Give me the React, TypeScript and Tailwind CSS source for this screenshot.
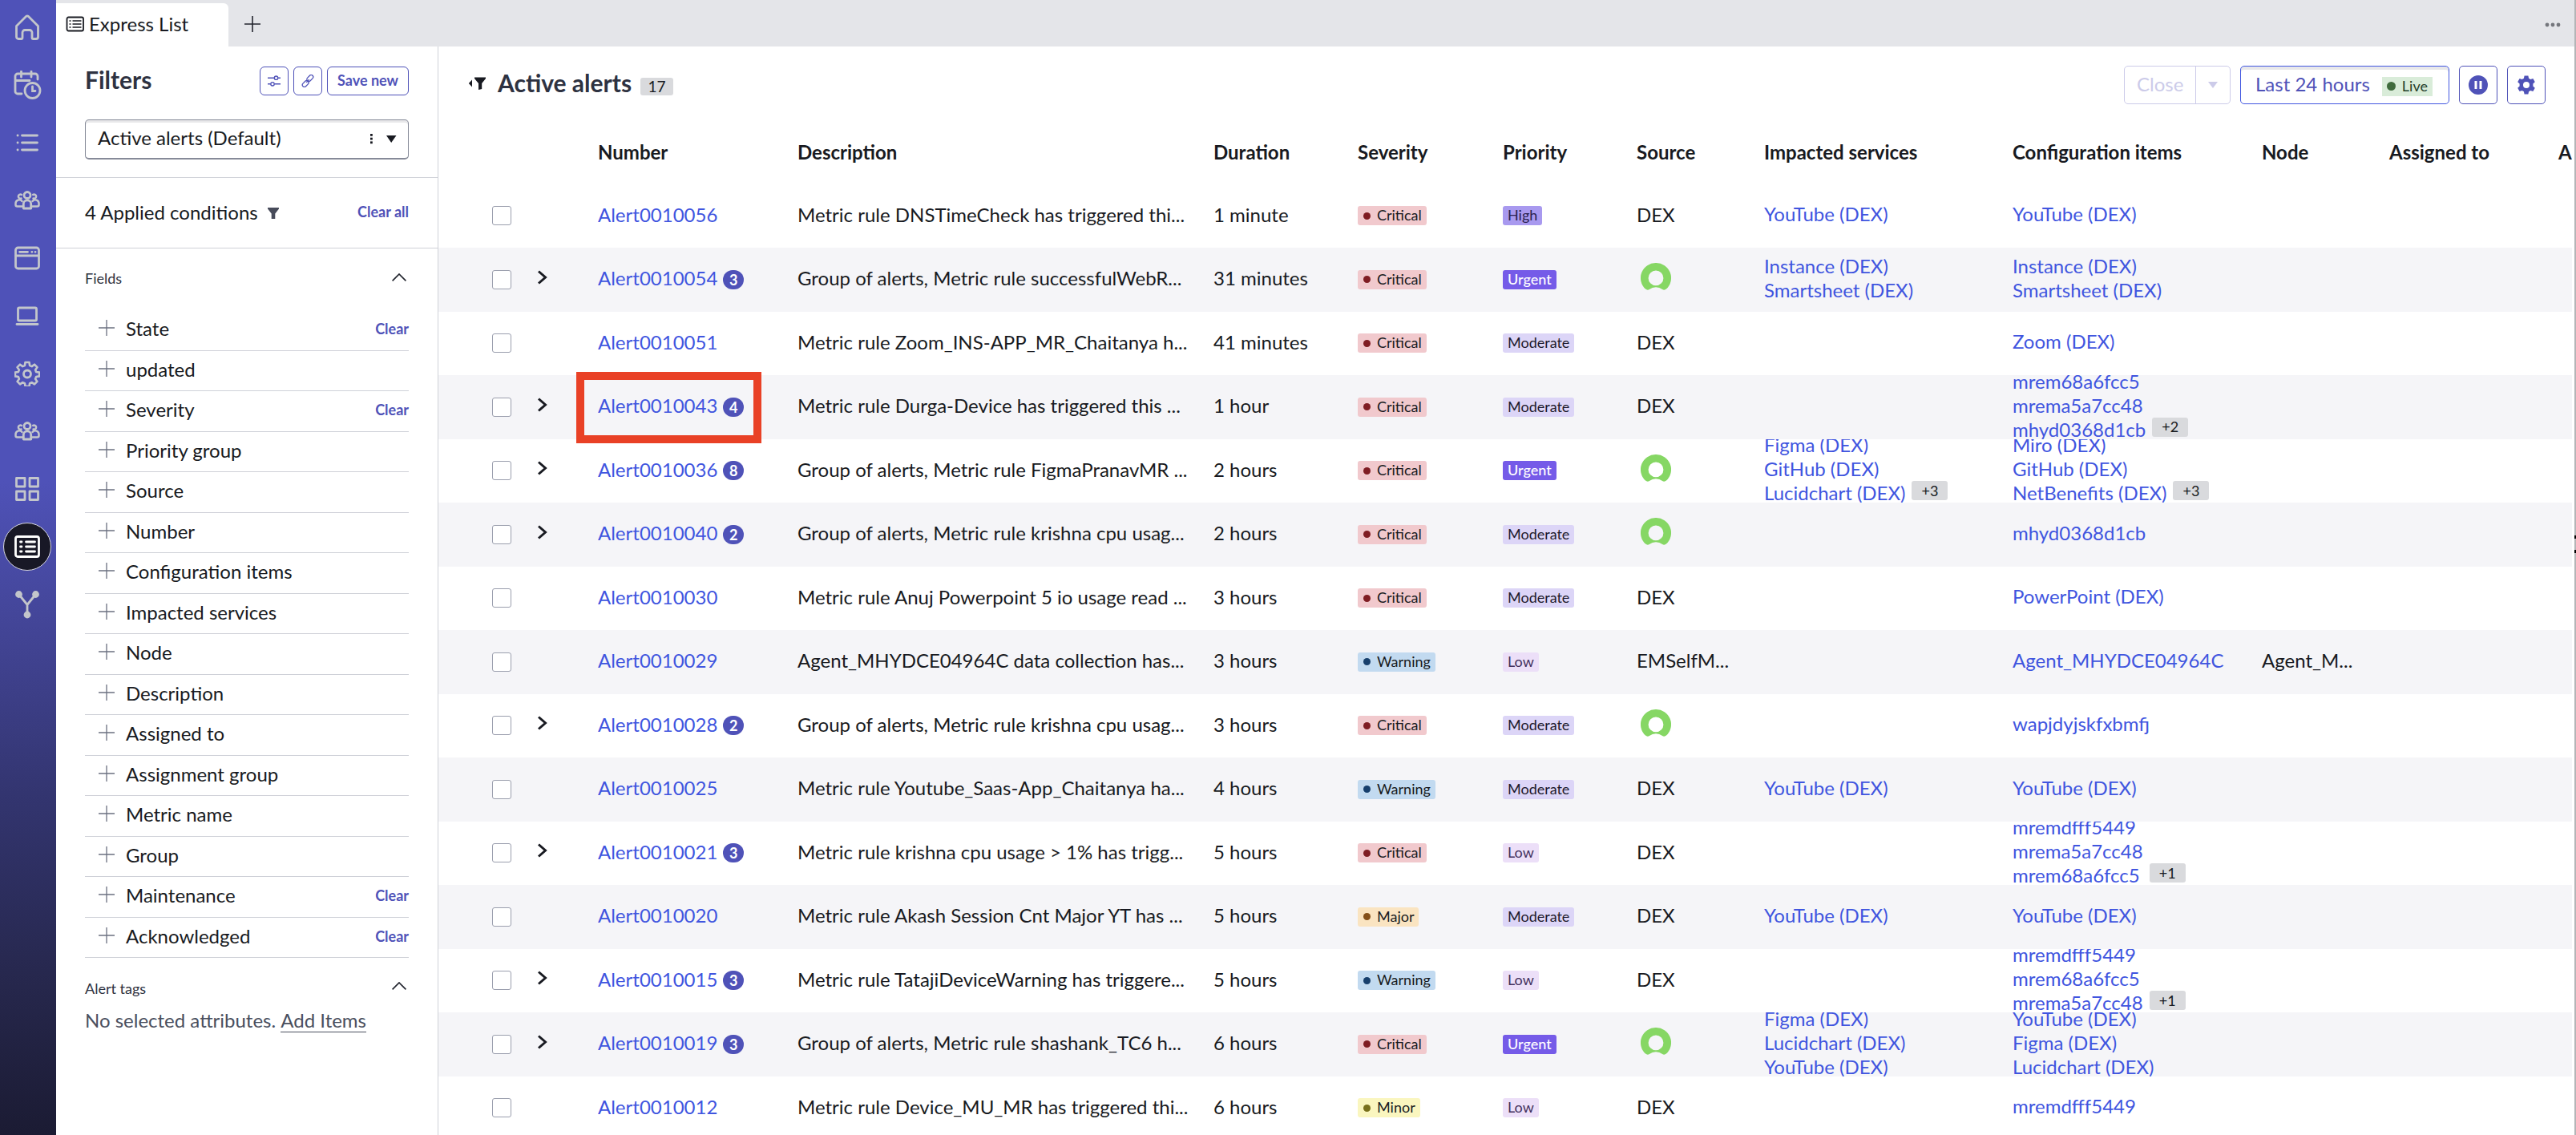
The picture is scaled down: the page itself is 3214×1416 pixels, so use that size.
import React from 'react';

type Alert = {
  number: string;
  count?: number;
  description: string;
  duration: string;
  severity: 'Critical' | 'Warning' | 'Major' | 'Minor';
  priority: 'High' | 'Urgent' | 'Moderate' | 'Low';
  source: string;
  services?: string[];
  moreServices?: number;
  items?: string[];
  moreItems?: number;
  node?: string;
};

const alerts: Alert[] = [
  { number: 'Alert0010056', description: 'Metric rule DNSTimeCheck has triggered thi...', duration: '1 minute', severity: 'Critical', priority: 'High', source: 'DEX', services: ['YouTube (DEX)'], items: ['YouTube (DEX)'] },
  { number: 'Alert0010054', count: 3, description: 'Group of alerts, Metric rule successfulWebR...', duration: '31 minutes', severity: 'Critical', priority: 'Urgent', source: 'now', services: ['Instance (DEX)', 'Smartsheet (DEX)'], items: ['Instance (DEX)', 'Smartsheet (DEX)'] },
  { number: 'Alert0010051', description: 'Metric rule Zoom_INS-APP_MR_Chaitanya h...', duration: '41 minutes', severity: 'Critical', priority: 'Moderate', source: 'DEX', items: ['Zoom (DEX)'] },
  { number: 'Alert0010043', count: 4, description: 'Metric rule Durga-Device has triggered this ...', duration: '1 hour', severity: 'Critical', priority: 'Moderate', source: 'DEX', items: ['mrem68a6fcc5', 'mrema5a7cc48', 'mhyd0368d1cb'], moreItems: 2 },
  { number: 'Alert0010036', count: 8, description: 'Group of alerts, Metric rule FigmaPranavMR ...', duration: '2 hours', severity: 'Critical', priority: 'Urgent', source: 'now', services: ['Figma (DEX)', 'GitHub (DEX)', 'Lucidchart (DEX)'], moreServices: 3, items: ['Miro (DEX)', 'GitHub (DEX)', 'NetBenefits (DEX)'], moreItems: 3 },
  { number: 'Alert0010040', count: 2, description: 'Group of alerts, Metric rule krishna cpu usag...', duration: '2 hours', severity: 'Critical', priority: 'Moderate', source: 'now', items: ['mhyd0368d1cb'] },
  { number: 'Alert0010030', description: 'Metric rule Anuj Powerpoint 5 io usage read ...', duration: '3 hours', severity: 'Critical', priority: 'Moderate', source: 'DEX', items: ['PowerPoint (DEX)'] },
  { number: 'Alert0010029', description: 'Agent_MHYDCE04964C data collection has...', duration: '3 hours', severity: 'Warning', priority: 'Low', source: 'EMSelfM...', items: ['Agent_MHYDCE04964C'], node: 'Agent_M...' },
  { number: 'Alert0010028', count: 2, description: 'Group of alerts, Metric rule krishna cpu usag...', duration: '3 hours', severity: 'Critical', priority: 'Moderate', source: 'now', items: ['wapjdyjskfxbmfj'] },
  { number: 'Alert0010025', description: 'Metric rule Youtube_Saas-App_Chaitanya ha...', duration: '4 hours', severity: 'Warning', priority: 'Moderate', source: 'DEX', services: ['YouTube (DEX)'], items: ['YouTube (DEX)'] },
  { number: 'Alert0010021', count: 3, description: 'Metric rule krishna cpu usage > 1% has trigg...', duration: '5 hours', severity: 'Critical', priority: 'Low', source: 'DEX', items: ['mremdfff5449', 'mrema5a7cc48', 'mrem68a6fcc5'], moreItems: 1 },
  { number: 'Alert0010020', description: 'Metric rule Akash Session Cnt Major YT has ...', duration: '5 hours', severity: 'Major', priority: 'Moderate', source: 'DEX', services: ['YouTube (DEX)'], items: ['YouTube (DEX)'] },
  { number: 'Alert0010015', count: 3, description: 'Metric rule TatajiDeviceWarning has triggere...', duration: '5 hours', severity: 'Warning', priority: 'Low', source: 'DEX', items: ['mremdfff5449', 'mrem68a6fcc5', 'mrema5a7cc48'], moreItems: 1 },
  { number: 'Alert0010019', count: 3, description: 'Group of alerts, Metric rule shashank_TC6 h...', duration: '6 hours', severity: 'Critical', priority: 'Urgent', source: 'now', services: ['Figma (DEX)', 'Lucidchart (DEX)', 'YouTube (DEX)'], items: ['YouTube (DEX)', 'Figma (DEX)', 'Lucidchart (DEX)'] },
  { number: 'Alert0010012', description: 'Metric rule Device_MU_MR has triggered thi...', duration: '6 hours', severity: 'Minor', priority: 'Low', source: 'DEX', items: ['mremdfff5449'] },
];

const columns = ['Number', 'Description', 'Duration', 'Severity', 'Priority', 'Source', 'Impacted services', 'Configuration items', 'Node', 'Assigned to', 'A'];

const fields = [
  { name: 'State', clear: true },
  { name: 'updated' },
  { name: 'Severity', clear: true },
  { name: 'Priority group' },
  { name: 'Source' },
  { name: 'Number' },
  { name: 'Configuration items' },
  { name: 'Impacted services' },
  { name: 'Node' },
  { name: 'Description' },
  { name: 'Assigned to' },
  { name: 'Assignment group' },
  { name: 'Metric name' },
  { name: 'Group' },
  { name: 'Maintenance', clear: true },
  { name: 'Acknowledged', clear: true },
];

const severityStyles = {
  Critical: { badge: 'bg-[#f1c9cd]', dot: 'bg-[#7f1d23]' },
  Warning: { badge: 'bg-[#c2daf0]', dot: 'bg-[#173f6c]' },
  Major: { badge: 'bg-[#fae4c1]', dot: 'bg-[#84501a]' },
  Minor: { badge: 'bg-[#faf6bf]', dot: 'bg-[#78701c]' },
};

const priorityStyles = {
  High: 'bg-[#a899ef] text-[#2a2250]',
  Urgent: 'bg-[#755be8] text-white font-medium',
  Moderate: 'bg-[#dcd5f7] text-[#1d1a2e]',
  Low: 'bg-[#ecdff8] text-[#43305c]',
};

const gridCols = 'grid grid-cols-[56px_76px_249px_519px_180px_181px_167px_159px_310px_311px_159px_211px_1fr]';

const gearPath =
  'M13.5 2h5l.6 4 2.6 1.1 3.3-2.4 3.4 3.5-2.3 3.2 1 2.6 4 .6v4.8l-4 .7-1 2.6 2.3 3.2-3.4 3.5-3.3-2.3-2.6 1-.6 4h-5l-.6-4-2.6-1-3.3 2.3-3.4-3.5 2.3-3.2-1-2.6-4-.7v-4.8l4-.6 1-2.6-2.3-3.2L7 4.7l3.300 2.400L12.900 6z';

function Icon({ children, className = '' }: { children: React.ReactNode; className?: string }) {
  return (
    <svg viewBox="0 0 32 32" className={`w-8 h-8 shrink-0 ${className}`} fill="none" stroke="currentColor" strokeWidth="2.8" strokeLinecap="round" strokeLinejoin="round">
      {children}
    </svg>
  );
}

function UsersIcon() {
  return (
    <Icon>
      <circle cx="16" cy="9.500" r="4" />
      <path d="M11.300 26v-5.500a4.700 4.700 0 0 1 9.400 0V26z" />
      <path d="M8.500 13.500a2.600 2.600 0 1 1 .3-4.600M23.500 13.500a2.600 2.600 0 1 0-.3-4.600" strokeWidth="2.500" />
      <path d="M11 23.500H3.500a2 2 0 0 1-2-2v-1.500a4.500 4.500 0 0 1 8-3M21 23.500h7.500a2 2 0 0 0 2-2v-1.500a4.500 4.500 0 0 0-8-3" strokeWidth="2.500" />
    </Icon>
  );
}

function Sidebar() {
  return (
    <aside className="w-[70px] shrink-0 flex flex-col items-center gap-3 pr-[2px] bg-[linear-gradient(to_bottom,#4f52b8_0px,#4f52b8_600px,#434597_780px,#333570_990px,#26274c_1230px,#1b1b33_1416px)] text-[#c3c6cb] pt-[4px]">
      <div className="h-[60px] flex items-center">
        <Icon>
          <path d="M2.500 14.500 14.500 2.600a2.200 2.200 0 0 1 3 0L29.500 14.500V28a2.500 2.500 0 0 1-2.500 2.500h-3.500A1.500 1.500 0 0 1 22 29v-6.500a3 3 0 0 0-3-3h-6a3 3 0 0 0-3 3V29a1.500 1.500 0 0 1-1.500 1.500H5A2.500 2.500 0 0 1 2.500 28z" />
        </Icon>
      </div>
      <div className="h-[60px] flex items-center">
        <svg viewBox="0 0 36 36" className="w-9 h-9" fill="none" stroke="currentColor" strokeWidth="2.800" strokeLinecap="round">
          <path d="M11 29H6a3 3 0 0 1-3-3V7a3 3 0 0 1 3-3h22a3 3 0 0 1 3 3v4M3 12.500h18M10.500 1v7M23 1v7" />
          <circle cx="24.500" cy="25" r="9.500" />
          <path d="M24.500 20v5.500H28" />
        </svg>
      </div>
      <div className="h-[60px] flex items-center">
        <Icon>
          <path d="M9.500 7h19M9.500 16h19M9.500 25h19" />
          <path d="M4 7h.1M4 16h.1M4 25h.1" />
        </Icon>
      </div>
      <div className="h-[60px] flex items-center"><UsersIcon /></div>
      <div className="h-[60px] flex items-center">
        <Icon>
          <rect x="1.500" y="3" width="29" height="26" rx="3" />
          <path d="M2 13h28M6.500 8.300h10M21.800 8.300h.1M26 8.300h.1" />
        </Icon>
      </div>
      <div className="h-[60px] flex items-center">
        <Icon>
          <rect x="4.500" y="6" width="23" height="16" rx="1.500" />
          <path d="M3 26.500h26" />
        </Icon>
      </div>
      <div className="h-[60px] flex items-center">
        <Icon>
          <path d={gearPath} strokeWidth="2.600" />
          <circle cx="16" cy="16.500" r="4.500" />
        </Icon>
      </div>
      <div className="h-[60px] flex items-center"><UsersIcon /></div>
      <div className="h-[60px] flex items-center">
        <Icon>
          <path d="M2.500 2.500h10.500v10.500H2.500zM19 2.500h10.500v10.500H19zM2.500 19h10.500v10.500H2.500zM19 19h10.500v10.500H19z" />
        </Icon>
      </div>
      <div className="w-[60px] h-[60px] flex items-center justify-center rounded-full bg-[#181826] border border-[#d8d8e0] text-white">
        <Icon>
          <rect x="1.500" y="3.500" width="29" height="25" rx="2.500" />
          <path d="M14.500 10h11M14.500 16h11M14.500 22h11M7.500 10h1.500M7.500 16h1.500M7.500 22h1.500" />
        </Icon>
      </div>
      <div className="h-[60px] flex items-center">
        <svg viewBox="0 0 32 36" className="w-8 h-9" fill="currentColor" stroke="currentColor" strokeWidth="2.800">
          <path d="M5.500 5.500 16 18.500 26.500 5.500M16 18v12" fill="none" />
          <circle cx="5.500" cy="5.500" r="3" />
          <circle cx="26.500" cy="5.500" r="3" />
          <circle cx="16" cy="31" r="3" />
        </svg>
      </div>
    </aside>
  );
}

function TabBar() {
  return (
    <header className="h-[58px] flex items-end bg-[#e4e5e9]">
      <div className="w-[215px] h-[54px] flex items-center pl-3 pb-[2px] rounded-tr-[6px] bg-white">
        <svg viewBox="0 0 24 20" className="w-6 h-5 mr-[5px]" fill="none" stroke="#181a21" strokeWidth="1.800">
          <rect x="1.500" y="1.500" width="20.500" height="17" rx="2" />
          <path d="M8.500 6h11M8.500 10h11M8.500 14h11M4.500 6h2M4.500 10h2M4.500 14h2" strokeWidth="1.500" />
        </svg>
        <span>Express List</span>
      </div>
      <svg viewBox="0 0 20 20" className="w-5 h-5 ml-5 mb-[18px]" stroke="#22252e" strokeWidth="1.600">
        <path d="M10 0v20M0 10h20" />
      </svg>
      <svg viewBox="0 0 20 6" className="w-5 h-[6px] ml-auto mr-[17px] mb-[24px]" fill="#74767c">
        <circle cx="3" cy="3" r="2.400" />
        <circle cx="10" cy="3" r="2.400" />
        <circle cx="17" cy="3" r="2.400" />
      </svg>
    </header>
  );
}

function Caret() {
  return (
    <svg viewBox="0 0 18 10" className="w-[18px] h-[10px] mr-[3px]" fill="none" stroke="#22252e" strokeWidth="1.700">
      <path d="M.6 9.400 9 1l8.400 8.400" />
    </svg>
  );
}

function FilterPanel() {
  return (
    <section className="w-[477px] shrink-0 border-r border-[#cfd1d8] flex flex-col">
      <div className="h-[164px] px-9 border-b border-[#cfd1d8]">
        <div className="flex items-center pt-6">
          <h2 className="text-[30px] leading-[34px] font-bold text-[#2e3241] mb-[4px]">Filters</h2>
          <div className="ml-auto flex gap-[6px]">
            <button className="w-9 h-9 flex items-center justify-center rounded-[6px] border border-[#4f52b8] text-[#4f52b8]">
              <svg viewBox="0 0 16 16" className="w-4 h-4" fill="none" stroke="currentColor" strokeWidth="1.400">
                <path d="M0 4.200h8M13 4.200h3M0 11.800h3.500M8.500 11.800H16" />
                <circle cx="10.500" cy="4.200" r="2.200" />
                <circle cx="6" cy="11.800" r="2.200" />
              </svg>
            </button>
            <button className="w-9 h-9 flex items-center justify-center rounded-[6px] border border-[#4f52b8] text-[#4f52b8]">
              <svg viewBox="0 0 16 16" className="w-4 h-4" fill="none" stroke="currentColor" strokeWidth="1.300">
                <rect x="6.300" y="2" width="9" height="5" rx="2.500" transform="rotate(-45 10.800 4.500)" />
                <rect x=".7" y="9" width="9" height="5" rx="2.500" transform="rotate(-45 5.200 11.500)" />
                <path d="m6.200 9.800 3.600-3.600" />
              </svg>
            </button>
            <button className="w-[102px] h-9 rounded-[6px] border border-[#4f52b8] text-[18px] leading-[32px] pb-[2px] font-bold text-[#4f52b8]">Save new</button>
          </div>
        </div>
        <div className="mt-[29px] h-[50px] flex items-center px-[15px] rounded-[5px] border border-b-2 border-[#868a98] shadow-[inset_0_3px_0_#e8e8ea]">
          <span className="pb-[3px]">Active alerts (Default)</span>
          <svg viewBox="0 0 34 14" className="w-[34px] h-[14px] ml-auto -mr-[1px] mb-[1px]" fill="#181a21">
            <rect x="1" y="1" width="2.800" height="2.800" />
            <rect x="1" y="5.700" width="2.800" height="2.800" />
            <rect x="1" y="10.400" width="2.800" height="2.800" />
            <path d="M21 3h12.500L27.200 12z" />
          </svg>
        </div>
      </div>

      <div className="h-[88px] flex items-center px-9 pb-[2px] border-b border-[#cfd1d8]">
        <span>4 Applied conditions</span>
        <svg viewBox="0 0 14 14" className="w-[14px] h-[14px] ml-[12px] mt-[2px]" fill="#474b5a">
          <path d="M0 0h14v1.500L9.300 7.500V14H4.700V7.500L0 1.500z" />
        </svg>
        <span className="ml-auto text-[18px] font-bold text-[#4f52b8] mb-[2px]">Clear all</span>
      </div>

      <div className="px-9">
        <div className="h-[77px] flex items-center pb-[3px] text-[18px] text-[#2e3241]">
          <span>Fields</span>
          <div className="ml-auto mb-[2px]"><Caret /></div>
        </div>
        {fields.map((field) => (
          <div key={field.name} className="h-[50.500px] flex items-center pl-[17px] border-b border-[#cfd1d8]">
            <svg viewBox="0 0 20 20" className="w-5 h-5 mr-[14px] mb-[5px]" stroke="#6b7080" strokeWidth="1.300">
              <path d="M10 0v20M0 10h20" />
            </svg>
            <span className="mb-[3px]">{field.name}</span>
            {field.clear && <span className="ml-auto mb-[3px] text-[18px] font-bold text-[#4f52b8]">Clear</span>}
          </div>
        ))}
        <div className="mt-[25px] h-[26px] flex items-center text-[18px] text-[#2e3241]">
          <span>Alert tags</span>
          <div className="ml-auto mb-[6px]"><Caret /></div>
        </div>
        <p className="mt-[12px] text-[#4a4f5e]">
          No selected attributes. <span className="inline-block leading-[28px] border-b border-[#4a4f5e]">Add Items</span>
        </p>
      </div>
    </section>
  );
}

function MainHeader() {
  return (
    <div className="h-[95px] flex items-start pt-[24px] pl-[37px] pr-[36px]">
      <svg viewBox="0 0 22 16" className="w-[22px] h-4 mt-[14px]" fill="#181a21">
        <path d="M5 3.500v9L.8 8zM8 .5h14v1.500l-4.800 6V15l-4.200 1V8L8 2z" />
      </svg>
      <h1 className="ml-[15px] mt-[2px] text-[30px] leading-[38px] font-bold text-[#2e3241]">Active alerts</h1>
      <span className="ml-[11px] mt-[15px] w-[41px] h-[22px] flex items-center justify-center rounded-[3px] bg-[#d9dadd] text-[19px]">17</span>

      <div className="ml-auto flex gap-3">
        <div className="h-12 flex rounded-[5px] border border-[#cccbe9] text-[#cccbe9]">
          <span className="w-[89px] pl-[15px] leading-[44px] border-r border-[#cccbe9]">Close</span>
          <span className="w-[42px] flex items-center justify-center">
            <svg viewBox="0 0 12 8" className="w-3 h-2" fill="currentColor"><path d="M0 0h12L6 8z" /></svg>
          </span>
        </div>
        <div className="w-[261px] h-12 flex items-center pl-[18px] rounded-[5px] border border-[#4257e0] shadow-[inset_0_4px_0_#e8e8ea] text-[#4f52b8]">
          <span className="mb-[2px]">Last 24 hours</span>
          <span className="ml-[15px] mt-[3px] w-[63px] h-6 flex items-center pl-[6px] bg-[#d9ecd9] text-[18px] text-[#24402a]">
            <i className="w-[11px] h-[11px] mr-[8px] rounded-full bg-[#3f6b3c]" />
            <span className="pb-[1px]">Live</span>
          </span>
        </div>
        <button className="w-12 h-12 flex items-center justify-center rounded-[5px] border border-[#4f52b8]">
          <svg viewBox="0 0 24 24" className="w-6 h-6">
            <circle cx="12" cy="12" r="12" fill="#4f52b8" />
            <path d="M7.500 7h3v10h-3zM13.500 7h3v10h-3z" fill="white" />
          </svg>
        </button>
        <button className="w-12 h-12 flex items-center justify-center rounded-[5px] border border-[#4f52b8]">
          <svg viewBox="0 0 24 24" className="w-6 h-6" fill="#4f52b8" fillRule="evenodd">
            <path d="M9.600.5h4.800l.7 3.200 2.200 1.300 3.100-1 2.400 4.200-2.400 2.200v3.200l2.400 2.200-2.400 4.200-3.100-1-2.200 1.300-.7 3.200H9.600l-.7-3.200L6.700 19l-3.100 1-2.400-4.200 2.400-2.200v-3.200L1.200 8.200 3.600 4l3.100 1 2.200-1.300zM12 8a4 4 0 1 0 0 8 4 4 0 0 0 0-8z" />
          </svg>
        </button>
      </div>
    </div>
  );
}

function LinkList({ links = [], more }: { links?: string[]; more?: number }) {
  return (
    <div className="flex items-end">
      <div className="flex flex-col text-[#4055df]">
        {links.map((link) => (
          <a key={link} className="h-[30px] leading-[26px]">{link}</a>
        ))}
      </div>
      {more && (
        <span className="w-[45px] h-6 mb-2 ml-2 pb-[1px] flex items-center justify-center rounded-[3px] bg-[#d9dadd] text-[18px]">+{more}</span>
      )}
    </div>
  );
}

function AlertRow({ alert }: { alert: Alert }) {
  const severity = severityStyles[alert.severity];
  return (
    <div className={`${gridCols} grid-rows-[79.500px] h-[79.500px] shrink-0 items-center pl-[67px] overflow-hidden even:bg-[#f5f5f8]`}>
      <span className="w-6 h-6 rounded-[3px] border-[1.500px] border-[#9a9ead] bg-white" />
      <span>
        {alert.count && (
          <svg viewBox="0 0 14 18" className="w-[14px] h-[18px] mb-[6px]" fill="none" stroke="#181a21" strokeWidth="3">
            <path d="m2 1.500 8.500 7.500L2 16.500" />
          </svg>
        )}
      </span>
      <span className="flex items-center">
        <a className="leading-[27px] pb-[4px] text-[#4055df]">{alert.number}</a>
        {alert.count && (
          <span className="ml-[7px] w-[26px] h-6 flex items-center justify-center rounded-full bg-[#4f52b8] text-white text-[18px] font-bold leading-none">{alert.count}</span>
        )}
      </span>
      <span className="whitespace-nowrap leading-[27px] pb-[4px]">{alert.description}</span>
      <span className="leading-[27px] pb-[4px]">{alert.duration}</span>
      <span>
        <span className={`w-fit h-6 flex items-center pl-[7px] pr-[6px] rounded-[3px] text-[18px] leading-[22px] ${severity.badge}`}>
          <i className={`w-[9px] h-[9px] mr-2 rounded-full ${severity.dot}`} />
          <span className="pb-[2px]">{alert.severity}</span>
        </span>
      </span>
      <span>
        <span className={`w-fit h-6 block px-[6px] rounded-[3px] text-[18px] leading-[22px] ${priorityStyles[alert.priority]}`}>{alert.priority}</span>
      </span>
      {alert.source === 'now' ? (
        <svg viewBox="0 0 38 34" className="w-[38px] h-[34px] ml-[5px] mb-[7px]" fill="#86d764" fillRule="evenodd">
          <path d="M19 0a18.800 18.800 0 0 0-13 32.600c1.400 1.300 3.400 1.500 4.900.4a13.500 13.500 0 0 1 16.200 0c1.500 1.100 3.500.9 4.900-.4A18.800 18.800 0 0 0 19 0zm0 28.300a9.400 9.400 0 1 1 0-18.800 9.400 9.400 0 0 1 0 18.800z" />
        </svg>
      ) : (
        <span className="leading-[27px] pb-[4px]">{alert.source}</span>
      )}
      <LinkList links={alert.services} more={alert.moreServices} />
      <LinkList links={alert.items} more={alert.moreItems} />
      <span className="leading-[27px] pb-[4px]">{alert.node}</span>
    </div>
  );
}

function AlertTable() {
  return (
    <div className="relative flex-1 flex flex-col mr-[3px] overflow-hidden">
      <div className={`${gridCols} h-[76.500px] shrink-0 items-center pl-[67px] font-bold`}>
        <span />
        <span />
        {columns.map((column) => (
          <span key={column} className="whitespace-nowrap mb-[3px]">{column}</span>
        ))}
      </div>
      <div className="flex flex-col">
        {alerts.map((alert) => (
          <AlertRow key={alert.number} alert={alert} />
        ))}
      </div>
      {/* callout around the grouped alert */}
      <div className="absolute left-[172px] top-[311px] w-[231px] h-[89px] border-[10px] border-[#e94126]" />
    </div>
  );
}

function App() {
  return (
    <div className="w-[3214px] h-[1416px] flex overflow-hidden bg-white text-[24px] leading-[30px] text-[#181a21] font-[Lato,sans-serif]">
      <Sidebar />
      <div className="flex-1 min-w-0 flex flex-col">
        <TabBar />
        <div className="flex-1 min-h-0 flex">
          <FilterPanel />
          <main className="flex-1 min-w-0 flex flex-col">
            <MainHeader />
            <AlertTable />
          </main>
        </div>
      </div>
      <div className="w-[2px] shrink-0 bg-[#b4b5b7]">
        <div className="mt-[668px] h-[4px] bg-black" />
        <div className="mt-[14px] h-[4px] bg-black" />
      </div>
    </div>
  );
}

export default App;
